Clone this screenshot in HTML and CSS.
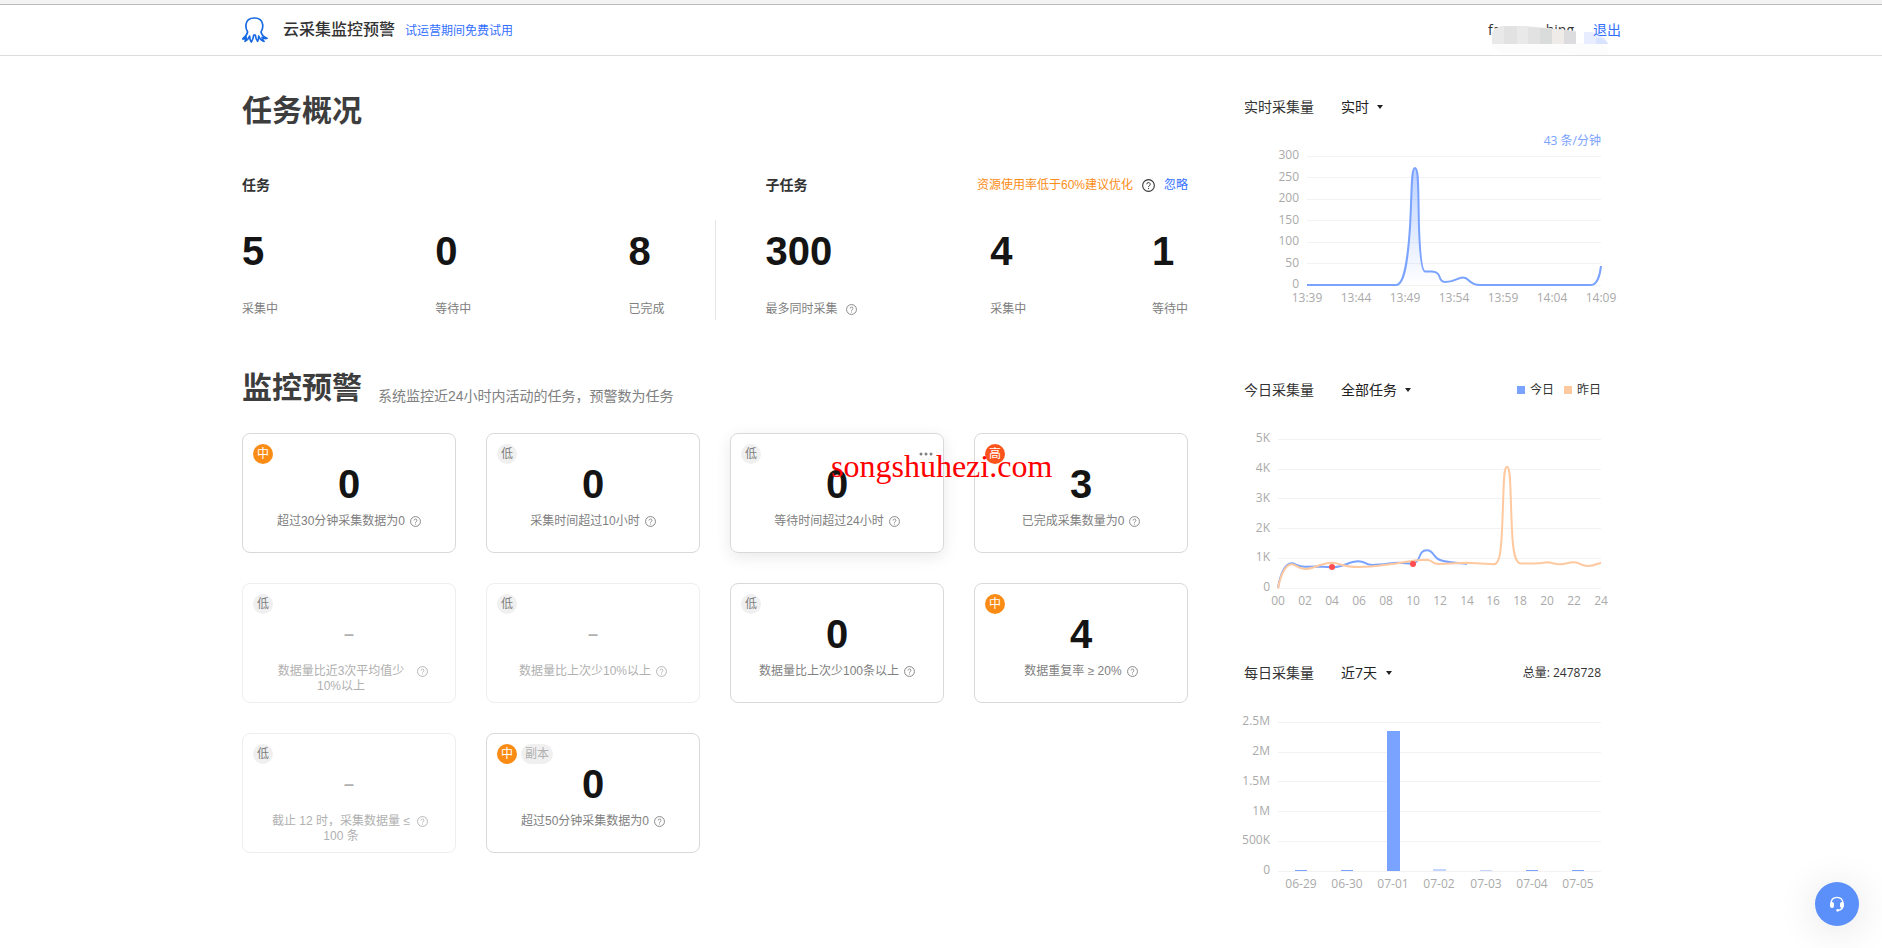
FILE: index.html
```html
<!DOCTYPE html>
<html lang="zh-CN">
<head>
  <meta charset="UTF-8" />
  <meta name="viewport" content="width=device-width, initial-scale=1.0"/>
  <title>云采集监控预警</title>
  <link rel="stylesheet" href="styles.css">
</head>
<body>

  <!-- Shared icons -->
  <svg class="sprite" aria-hidden="true">
    <symbol id="help" viewBox="0 0 24 24">
      <circle cx="12" cy="12" r="10.8" fill="none" stroke="currentColor" stroke-width="2"/>
      <path d="M8.8 9.8a3.2 3.2 0 1 1 4.8 2.7c-1.1.7-1.6 1.1-1.6 2.3" fill="none" stroke="currentColor" stroke-width="1.8"/>
      <circle cx="12" cy="17.6" r="1.2" fill="currentColor"/>
    </symbol>
  </svg>

  <header class="topbar">
    <div class="container topbar-inner">
      <svg class="logo" viewBox="0 0 78 78" fill="none" stroke="#1668e3" stroke-width="5" stroke-linejoin="round" stroke-linecap="round">
        <path d="M17 45C12 38 11 30 12 22C14 8 24 3 37 3C50 3 60 8 62 22C63 30 62 38 57 45C59 54 65 60 75 64C70 66 66 65 60 61C61 66 63 70 66 73C58 71 53 65 50 57C50 64 49 70 47 73C43 69 41 62 40 54H35C34 63 32 70 28 75C24 70 23 63 23 57C20 65 15 70 9 73C11 69 13 65 13 61C9 65 6 66 2 66C9 60 15 54 17 45Z"/>
      </svg>
      <div class="brand">
        <span class="brand-name">云采集监控预警</span>
        <a class="trial" href="#">试运营期间免费试用</a>
      </div>
      <div class="account">
        <span class="username"><span>fa</span><span>hing</span>
          <svg class="mosaic" viewBox="0 0 120 32">
            <path d="M4 19h108q12 4 10 12H88Q80 29 70 29H14Q6 28 4 20Z" fill="#fcfcfc"/>
            <path d="M96 8h8q14 4 16 12H96Z" fill="#e8edff"/>
            <path d="M108 14h6q5 3 6 6h-12Z" fill="#d9e3ff"/>
            <path d="M4 20V10Q6 3 14 2H36L60 4 88 7V20Z" fill="#e9e9e9"/>
            <path d="M16 2H29V20H16ZM40 3 52 4V20H40Z" fill="#e2e2e2"/>
            <path d="M52 4 64 5V20H52Z" fill="#dadcdb"/>
            <path d="M64 5 76 6V20H64Z" fill="#eeebe8"/>
            <path d="M76 6 88 8V20H76Z" fill="#dcdcdf"/>
          </svg>
        </span>
        <a class="logout" href="#">退出</a>
      </div>
    </div>
  </header>

  <div class="container page">
    <main class="content">
      <h1>任务概况</h1>
      <div class="overview">
        <section class="group">
          <div class="group-head"><h3>任务</h3></div>
          <div class="stats">
            <div class="stat"><b>5</b><span>采集中</span></div>
            <div class="stat"><b>0</b><span>等待中</span></div>
            <div class="stat"><b>8</b><span>已完成</span></div>
          </div>
        </section>
        <div class="divider"></div>
        <section class="group">
          <div class="group-head">
            <h3>子任务</h3>
            <p class="advice">资源使用率低于60%建议优化
              <svg class="help help-dark"><use href="#help"/></svg>
              <a href="#">忽略</a>
            </p>
          </div>
          <div class="stats">
            <div class="stat"><b>300</b><span>最多同时采集<svg class="help"><use href="#help"/></svg></span></div>
            <div class="stat"><b>4</b><span>采集中</span></div>
            <div class="stat"><b>1</b><span>等待中</span></div>
          </div>
        </section>
      </div>

      <div class="alert-head">
        <h2>监控预警</h2>
        <p>系统监控近24小时内活动的任务，预警数为任务</p>
      </div>

      <div class="cards">
        <article class="card">
          <div class="tags"><i class="tag mid">中</i></div>
          <b>0</b>
          <p><span>超过30分钟采集数据为0</span><svg class="help"><use href="#help"/></svg></p>
        </article>
        <article class="card">
          <div class="tags"><i class="tag">低</i></div>
          <b>0</b>
          <p><span>采集时间超过10小时</span><svg class="help"><use href="#help"/></svg></p>
        </article>
        <article class="card active">
          <div class="tags"><i class="tag">低</i>
            <button class="more" type="button" aria-label="更多">
              <svg viewBox="0 0 14 4"><circle cx="2" cy="2" r="1.5"/><circle cx="7" cy="2" r="1.5"/><circle cx="12" cy="2" r="1.5"/></svg>
            </button>
          </div>
          <b>0</b>
          <p><span>等待时间超过24小时</span><svg class="help"><use href="#help"/></svg></p>
        </article>
        <article class="card">
          <div class="tags"><i class="tag high">高</i></div>
          <b>3</b>
          <p><span>已完成采集数量为0</span><svg class="help"><use href="#help"/></svg></p>
        </article>

        <article class="card off">
          <div class="tags"><i class="tag">低</i></div>
          <b>–</b>
          <p><span>数据量比近3次平均值少10%以上</span><svg class="help"><use href="#help"/></svg></p>
        </article>
        <article class="card off">
          <div class="tags"><i class="tag">低</i></div>
          <b>–</b>
          <p><span>数据量比上次少10%以上</span><svg class="help"><use href="#help"/></svg></p>
        </article>
        <article class="card">
          <div class="tags"><i class="tag">低</i></div>
          <b>0</b>
          <p><span>数据量比上次少100条以上</span><svg class="help"><use href="#help"/></svg></p>
        </article>
        <article class="card">
          <div class="tags"><i class="tag mid">中</i></div>
          <b>4</b>
          <p><span>数据重复率 ≥ 20%</span><svg class="help"><use href="#help"/></svg></p>
        </article>

        <article class="card off">
          <div class="tags"><i class="tag">低</i></div>
          <b>–</b>
          <p><span>截止 12 时，采集数据量 ≤ 100 条</span><svg class="help"><use href="#help"/></svg></p>
        </article>
        <article class="card">
          <div class="tags"><i class="tag mid">中</i><i class="tag copy">副本</i></div>
          <b>0</b>
          <p><span>超过50分钟采集数据为0</span><svg class="help"><use href="#help"/></svg></p>
        </article>

        <div class="watermark">songshuhezi.com</div>
      </div>
    </main>

    <aside class="charts">
      <!-- Realtime -->
      <section class="chart">
        <div class="chart-head">
          <label for="realtime">实时采集量</label>
          <span class="picker"><select id="realtime"><option>实时</option></select></span>
        </div>
        <svg class="plot" viewBox="0 0 377 210">
          <defs>
            <linearGradient id="fade" x1="0" y1="0" x2="0" y2="1">
              <stop offset="0" stop-color="#7aa2ff" stop-opacity=".5"/>
              <stop offset="1" stop-color="#7aa2ff" stop-opacity="0"/>
            </linearGradient>
          </defs>
          <text class="rate" x="357" y="28">43 条/分钟</text>
          <path class="grid" d="M63 39.5H357M63 60.5H357M63 82.5H357M63 103.5H357M63 125.5H357M63 146.5H357M63 168.5H357"/>
          <g class="y-axis">
            <text x="55" y="42">300</text>
            <text x="55" y="64">250</text>
            <text x="55" y="85">200</text>
            <text x="55" y="107">150</text>
            <text x="55" y="128">100</text>
            <text x="55" y="150">50</text>
            <text x="55" y="171">0</text>
          </g>
          <g class="x-axis">
            <text x="63" y="185">13:39</text>
            <text x="112" y="185">13:44</text>
            <text x="161" y="185">13:49</text>
            <text x="210" y="185">13:54</text>
            <text x="259" y="185">13:59</text>
            <text x="308" y="185">14:04</text>
            <text x="357" y="185">14:09</text>
          </g>
          <path fill="url(#fade)" d="M153 168C161 167 165 140 166 110C168 75 167 51 171 51C175 51 174 75 175 110C176 140 178 152 181 154.500H190C198 155 194 165 201 165C211 165 213 160.500 219 160.500C226 160.500 223 167 236 168Z"/>
          <path class="line today" d="M63 168H152C161 168 164 140 166 110C168 75 167 51 171 51C175 51 174 75 175 110C176 140 178 154 181 154.500H188C199 155 193 165 201 165C211 165 213 160.500 219 160.500C226 160.500 224 168 236 168H347C353 168 356 158 357 149"/>
        </svg>
      </section>

      <!-- Today / yesterday -->
      <section class="chart">
        <div class="chart-head">
          <label for="tasks">今日采集量</label>
          <span class="picker"><select id="tasks"><option>全部任务</option></select></span>
          <ul class="legend">
            <li>今日</li>
            <li class="past">昨日</li>
          </ul>
        </div>
        <svg class="plot" viewBox="0 0 377 210">
          <path class="grid" d="M34 39.5H357M34 69.5H357M34 98.500H357M34 128.500H357M34 158.500H357M34 188.500H357"/>
          <g class="y-axis">
            <text x="26" y="42">5K</text>
            <text x="26" y="72">4K</text>
            <text x="26" y="102">3K</text>
            <text x="26" y="132">2K</text>
            <text x="26" y="161">1K</text>
            <text x="26" y="191">0</text>
          </g>
          <g class="x-axis">
            <text x="34" y="205">00</text>
            <text x="61" y="205">02</text>
            <text x="88" y="205">04</text>
            <text x="115" y="205">06</text>
            <text x="142" y="205">08</text>
            <text x="169" y="205">10</text>
            <text x="196" y="205">12</text>
            <text x="223" y="205">14</text>
            <text x="249" y="205">16</text>
            <text x="276" y="205">18</text>
            <text x="303" y="205">20</text>
            <text x="330" y="205">22</text>
            <text x="357" y="205">24</text>
          </g>
          <path class="line today" d="M34 188C36 175 41 163 48 163.300C53 164 53 166.700 61 166.700L74 166.500L88 167.300C100 167 105 161.300 114 161.300C122 161.300 121 165 128 165C140 165 148 162.500 154 162.700L169 163.700C178 162 173 150.300 183 150.300C190 150.300 189 158 196 160C204 163 215 163 223 164"/>
          <path class="line yesterday" d="M34 188.500C36 177 41 164 48 164.300C53 165 54 169 61 169C70 169 76 163 88 162.700C96 162.700 97 167 115 167C128 167 140 165 146 164.300C158 163 165 160 183 159.700C189 160 187 164 195 164L223 162.700L250 164.300C256 164 257 150 258 130C260 90 259 66.700 263 66.700C267 66.700 266 90 268 130C269 152 271 163.500 277 163.500C288 163.500 295 164 303 162.300C308 162.500 310 164.300 316 164.300C322 164.300 324 162.300 330 162.300C337 162.300 336 166 344 166C350 166 353 164 357 162.700"/>
          <circle cx="88" cy="167" r="3" fill="#ff4d4f"/>
          <circle cx="169" cy="164" r="3" fill="#ff4d4f"/>
        </svg>
      </section>

      <!-- Daily -->
      <section class="chart">
        <div class="chart-head">
          <label for="daily">每日采集量</label>
          <span class="picker"><select id="daily"><option>近7天</option></select></span>
          <span class="total">总量: 2478728</span>
        </div>
        <svg class="plot" viewBox="0 0 377 210">
          <path class="grid" d="M34 39.500H357M34 69.500H357M34 98.500H357M34 128.500H357M34 158.500H357M34 188.500H357"/>
          <g class="y-axis">
            <text x="26" y="42">2.5M</text>
            <text x="26" y="72">2M</text>
            <text x="26" y="102">1.5M</text>
            <text x="26" y="132">1M</text>
            <text x="26" y="161">500K</text>
            <text x="26" y="191">0</text>
          </g>
          <g class="x-axis">
            <text x="57" y="205">06-29</text>
            <text x="103" y="205">06-30</text>
            <text x="149" y="205">07-01</text>
            <text x="195" y="205">07-02</text>
            <text x="242" y="205">07-03</text>
            <text x="288" y="205">07-04</text>
            <text x="334" y="205">07-05</text>
          </g>
          <g fill="#7aa2ff">
            <rect x="51" y="187" width="12" height="1"/>
            <rect x="97" y="187" width="12" height="1"/>
            <rect x="143" y="48" width="13" height="140"/>
            <rect x="189" y="186" width="13" height="2" opacity=".45"/>
            <rect x="236" y="187" width="12" height="1" opacity=".45"/>
            <rect x="282" y="187" width="12" height="1"/>
            <rect x="328" y="187" width="12" height="1"/>
          </g>
        </svg>
      </section>
    </aside>
  </div>

  <button class="service" type="button" aria-label="客服">
    <svg viewBox="0 0 48 48" fill="none" stroke="#fff" stroke-width="4">
      <path d="M6 24C6 12 13 4 24 4S42 12 42 24"/>
      <rect x="3" y="18" width="12" height="18" rx="6" fill="#fff" stroke="none"/>
      <rect x="33" y="18" width="12" height="18" rx="6" fill="#fff" stroke="none"/>
      <path d="M41 32C40 39 36 42 28 43"/>
      <circle cx="26" cy="43" r="4" fill="#fff" stroke="none"/>
    </svg>
  </button>

</body>
</html>
```

FILE: styles.css
```css
* {
  box-sizing: border-box;
  margin: 0;
  padding: 0;
}

body {
  min-height: 100vh;
  font-family: "Liberation Sans", "Noto Sans CJK SC", sans-serif;
  font-size: 12px;
  line-height: 20px;
  color: #333;
  background: #fff;
}

a {
  color: #3370ff;
  text-decoration: none;
}

.sprite {
  position: absolute;
  width: 0;
  height: 0;
}

.container {
  max-width: 1400px;
  margin: 0 auto;
  padding: 0 20px 0 1px;
}

/* Header */
.topbar {
  border-top: 4px solid #f3f3f3;
  border-bottom: 1px solid #ddd;
}

.topbar::before {
  content: "";
  display: block;
  height: 1px;
  background: #bbb;
}

.topbar-inner {
  display: flex;
  align-items: center;
  height: 50px;
}

.logo {
  width: 26px;
  height: 26px;
  margin-right: 15px;
}

.brand {
  display: flex;
  align-items: baseline;
  gap: 10px;
}

.brand-name {
  font-size: 16px;
  font-weight: 500;
}

.account {
  display: flex;
  gap: 19px;
  margin-left: auto;
  font-family: "Open Sans", "Noto Sans CJK SC", sans-serif;
  font-size: 14px;
}

.username {
  position: relative;
  display: flex;
  justify-content: space-between;
  width: 86px;
}

.mosaic {
  position: absolute;
  left: 0;
  top: 4px;
  width: 120px;
  height: 32px;
}

.logout {
  position: relative;
}

/* Page */
.page {
  display: flex;
  gap: 56px;
}

.content {
  flex: 1;
  padding: 35px 0 40px;
}

h1, h2 {
  font-size: 30px;
  line-height: 40px;
  color: #3d3d3d;
}

h3 {
  font-size: 14px;
}

.help {
  flex: none;
  width: 11px;
  height: 11px;
}

.overview {
  display: flex;
  align-items: flex-end;
  margin-top: 44px;
}

.group {
  flex: 1;
}

.group-head {
  display: flex;
  justify-content: space-between;
  align-items: center;
}

.advice {
  display: flex;
  align-items: center;
  gap: 9px;
  color: #fa8c16;
}

.help-dark {
  width: 13px;
  height: 13px;
  color: #333;
}

.divider {
  width: 1px;
  height: 100px;
  margin: 0 50px;
  background: #e5e5e5;
}

.stats {
  display: flex;
  justify-content: space-between;
  height: 100px;
  margin-top: 25px;
  padding-top: 11px;
}

.stat b {
  display: block;
  margin-bottom: 28px;
  font-size: 40px;
  line-height: 40px;
  color: #141414;
}

.stat span {
  display: flex;
  align-items: center;
  color: #808080;
}

.stat .help {
  margin: 0 8px;
}

/* Alerts */
.alert-head {
  display: flex;
  align-items: flex-end;
  gap: 16px;
  margin-top: 48px;
}

.alert-head p {
  padding-bottom: 2px;
  font-size: 14px;
  color: #808080;
}

.cards {
  position: relative;
  display: grid;
  grid-template-columns: repeat(4, 1fr);
  gap: 30px;
  margin-top: 25px;
}

.card {
  height: 120px;
  padding: 10px;
  border: 1px solid #d9d9d9;
  border-radius: 8px;
  text-align: center;
  color: #808080;
}

.card.active {
  box-shadow: 0 4px 16px rgba(0, 0, 0, 0.09);
}

.card.off {
  border-color: #eee;
  color: #b0b0b0;
}

.tags {
  display: flex;
  gap: 4px;
  height: 20px;
}

.tag {
  width: 20px;
  height: 20px;
  border-radius: 10px;
  font-style: normal;
  color: #808080;
  background: #f0f0f0;
}

.tag.mid {
  color: #fff;
  background: #fa8c16;
}

.tag.high {
  color: #fff;
  background: #fa541c;
}

.tag.copy {
  width: 32px;
  color: #b0b0b0;
}

.more {
  display: flex;
  align-items: center;
  width: 14px;
  height: 20px;
  margin-left: auto;
  border: none;
  background: none;
  cursor: pointer;
}

.more svg {
  width: 14px;
  fill: #808080;
}

.card b {
  display: block;
  font-size: 40px;
  line-height: 40px;
  color: #141414;
}

.card.off b {
  font-size: 18px;
  color: #b0b0b0;
}

.card p {
  display: flex;
  justify-content: center;
  gap: 5px;
  padding: 10px 17px 0;
  line-height: 15px;
}

.card .help {
  margin-top: 2px;
}

.watermark {
  position: absolute;
  left: 589px;
  top: 17px;
  font-family: "Liberation Serif", serif;
  font-size: 32px;
  line-height: 32px;
  color: #f00;
  pointer-events: none;
}

/* Charts */
.charts {
  width: 377px;
  padding-top: 41px;
  font-family: "Open Sans", "Noto Sans CJK SC", sans-serif;
}

.chart {
  margin-bottom: 53px;
}

.chart:last-child {
  margin-bottom: 0;
}

.chart-head {
  display: flex;
  align-items: center;
  height: 20px;
  padding-right: 20px;
}

.chart-head label {
  margin-right: 27px;
  font-size: 14px;
}

.picker {
  display: flex;
  align-items: center;
  gap: 8px;
}

.picker::after {
  content: "";
  border: 3px solid transparent;
  border-top: 4px solid #222;
  border-bottom: none;
}

.picker select {
  appearance: none;
  border: none;
  background: none;
  font: inherit;
  font-size: 14px;
  color: #222;
  cursor: pointer;
}

.legend {
  display: flex;
  gap: 10px;
  margin-left: auto;
  list-style: none;
}

.legend li {
  display: flex;
  align-items: center;
  gap: 5px;
}

.legend li::before {
  content: "";
  width: 8px;
  height: 8px;
  background: #7aa2ff;
}

.legend .past::before {
  background: #ffc9a0;
}

.total {
  margin-left: auto;
}

.plot {
  display: block;
  width: 100%;
  overflow: visible;
}

.plot text {
  font-size: 12px;
  fill: #aaa;
}

.plot .rate {
  text-anchor: end;
  fill: #7aa2ff;
}

.y-axis {
  text-anchor: end;
}

.x-axis {
  text-anchor: middle;
}

.grid {
  stroke: #f2f2f2;
}

.line {
  fill: none;
  stroke-width: 2;
}

.today {
  stroke: #7aa2ff;
}

.yesterday {
  stroke: #ffc9a0;
}

/* Support button */
.service {
  position: fixed;
  right: 23px;
  bottom: 22px;
  display: flex;
  align-items: center;
  justify-content: center;
  width: 44px;
  height: 44px;
  border: none;
  border-radius: 50%;
  background: #5b8ff9;
  box-shadow: 0 4px 40px rgba(0, 0, 0, 0.12);
  cursor: pointer;
}

.service svg {
  width: 16px;
  height: 16px;
}
```
